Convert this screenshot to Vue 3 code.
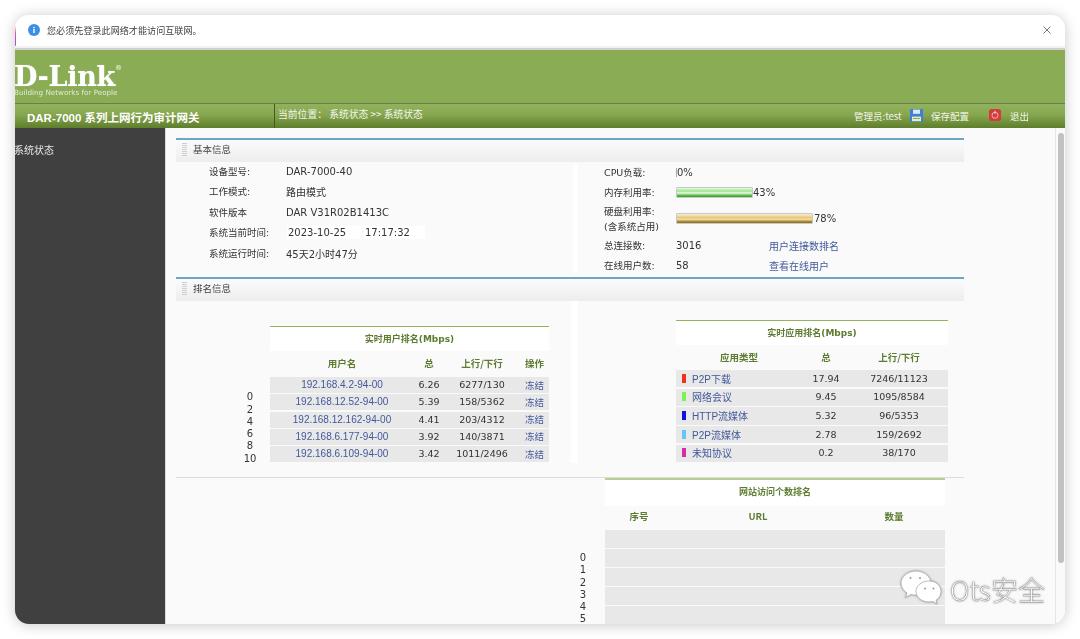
<template>
  <div class="page">
    <div class="window">
      <div class="notice">
        <span class="notice-left">
          <svg class="info-icon" viewBox="0 0 12 12" width="12" height="12">
            <circle cx="6" cy="6" r="6" fill="#3d8ee6" />
            <rect x="5.3" y="5" width="1.4" height="4" fill="#fff" />
            <rect x="5.3" y="2.9" width="1.4" height="1.4" fill="#fff" />
          </svg>
          您必须先登录此网络才能访问互联网。
        </span>
        <svg class="close-icon" viewBox="0 0 8 8" width="8" height="8">
          <path d="M.5.5l7 7M7.5.5l-7 7" stroke="#777" stroke-width="1" fill="none" />
        </svg>
      </div>

      <header class="brand">
        <div class="logo">D-Link<sup>®</sup></div>
        <div class="tagline">Building Networks for People</div>
      </header>

      <nav class="navbar">
        <div class="product">DAR-7000 系列上网行为审计网关</div>
        <div class="crumb">当前位置： 系统状态 &gt;&gt; 系统状态</div>
        <div class="nav-tools">
          <span class="admin">管理员:test</span>
          <svg class="save-icon" viewBox="0 0 13 13" width="13" height="13">
            <rect width="13" height="13" rx="1" fill="#3f7fd8" />
            <rect x="3" y=".6" width="7" height="4.2" fill="#dbe8f8" />
            <rect x="2" y="7.6" width="9" height="4.6" fill="#e8eeb8" />
            <rect x="3" y="9" width="7" height="1" fill="#8aa860" />
          </svg>
          <span class="save-text">保存配置</span>
          <svg class="off-icon" viewBox="0 0 12 12" width="12" height="12">
            <rect width="12" height="12" rx="2.5" fill="#d23c3c" />
            <circle cx="6" cy="6.3" r="3" fill="none" stroke="#f3b0b0" stroke-width="1" />
            <rect x="5.5" y="1.8" width="1" height="3" fill="#f7d0d0" />
          </svg>
          <span class="quit-text">退出</span>
        </div>
      </nav>

      <div class="body">
        <aside class="sidebar">系统状态</aside>

        <main class="content">
          <section class="panel">
            <h2 class="panel-head"><i class="grip"></i>基本信息</h2>
            <div class="basic">
              <div class="basic-left">
                <div class="row"><span class="label">设备型号:</span><span>DAR-7000-40</span></div>
                <div class="row"><span class="label">工作模式:</span><span>路由模式</span></div>
                <div class="row"><span class="label">软件版本</span><span>DAR V31R02B1413C</span></div>
                <div class="row">
                  <span class="label">系统当前时间:</span>
                  <span class="clock date">2023-10-25</span>
                  <span class="clock time">17:17:32</span>
                </div>
                <div class="row"><span class="label">系统运行时间:</span><span>45天2小时47分</span></div>
              </div>
              <div class="basic-right">
                <div class="row">
                  <span class="label">CPU负载:</span>
                  <span class="cpu-tick"></span><span>0%</span>
                </div>
                <div class="row">
                  <span class="label">内存利用率:</span>
                  <span class="bar bar-green"></span><span>43%</span>
                </div>
                <div class="row row-disk">
                  <span class="label">硬盘利用率:<br />(含系统占用)</span>
                  <span class="bar bar-gold"></span><span class="pct">78%</span>
                </div>
                <div class="row">
                  <span class="label">总连接数:</span>
                  <span class="value">3016</span><a class="link">用户连接数排名</a>
                </div>
                <div class="row">
                  <span class="label">在线用户数:</span>
                  <span class="value">58</span><a class="link">查看在线用户</a>
                </div>
              </div>
            </div>
          </section>

          <section class="panel">
            <h2 class="panel-head"><i class="grip"></i>排名信息</h2>
            <div class="rank">
              <div class="rank-left">
                <div class="axis">
                  <span v-for="n in userAxis" :key="n">{{ n }}</span>
                </div>
                <div class="table user-table">
                  <div class="table-title">实时用户排名(Mbps)</div>
                  <div class="table-head cols-user">
                    <span>用户名</span><span>总</span><span>上行/下行</span><span>操作</span>
                  </div>
                  <div class="table-rows">
                    <div v-for="u in users" :key="u.name" class="table-row cols-user">
                      <a class="link ip">{{ u.name }}</a>
                      <span>{{ u.total }}</span>
                      <span>{{ u.flow }}</span>
                      <a class="link">冻结</a>
                    </div>
                  </div>
                </div>
              </div>
              <div class="rank-right">
                <div class="table app-table">
                  <div class="table-title">实时应用排名(Mbps)</div>
                  <div class="table-head cols-app">
                    <span>应用类型</span><span>总</span><span>上行/下行</span>
                  </div>
                  <div class="table-rows">
                    <div v-for="a in apps" :key="a.name" class="table-row cols-app">
                      <a class="link app-name">
                        <i class="swatch" :style="{ background: a.color }"></i>{{ a.name }}
                      </a>
                      <span>{{ a.total }}</span>
                      <span>{{ a.flow }}</span>
                    </div>
                  </div>
                </div>
              </div>
            </div>
          </section>

          <section class="sites">
            <div class="axis site-axis">
              <span v-for="n in 6" :key="n">{{ n - 1 }}</span>
            </div>
            <div class="table site-table">
              <div class="table-title">网站访问个数排名</div>
              <div class="table-head cols-site">
                <span>序号</span><span>URL</span><span>数量</span>
              </div>
              <div class="table-rows">
                <div v-for="n in 5" :key="n" class="table-row"></div>
              </div>
            </div>
          </section>
        </main>

        <div class="scrollbar"><div class="thumb"></div></div>
      </div>

      <div class="watermark">
        <svg viewBox="0 0 44 38" width="44" height="38">
          <path d="M16 1C8 1 1 6.500 1 13c0 4 2.500 7.500 6 10l-1.500 4.500L11 24.500c1.600.4 3.300.6 5 .6 8 0 15-5.500 15-12S24 1 16 1z" fill="#fff" stroke="#aaa" stroke-width=".8" />
          <path d="M29 11c-7 0-13 4.600-13 10.500S22 32 29 32c1.300 0 2.600-.2 3.800-.5l4.200 2.500-1-3.700c3-2 5-5 5-8.800C41 15.600 36 11 29 11z" fill="#fff" stroke="#aaa" stroke-width=".8" />
          <circle cx="10.500" cy="8" r="1" fill="#999" /><circle cx="20" cy="8" r="1" fill="#999" />
          <circle cx="25" cy="18.500" r="1" fill="#999" /><circle cx="33.500" cy="18.500" r="1" fill="#999" />
        </svg>
        <span class="mark-text">Ots安全</span>
      </div>
    </div>
  </div>
</template>

<script setup>
const userAxis = [0, 2, 4, 6, 8, 10]

const users = [
  { name: '192.168.4.2-94-00', total: '6.26', flow: '6277/130' },
  { name: '192.168.12.52-94-00', total: '5.39', flow: '158/5362' },
  { name: '192.168.12.162-94-00', total: '4.41', flow: '203/4312' },
  { name: '192.168.6.177-94-00', total: '3.92', flow: '140/3871' },
  { name: '192.168.6.109-94-00', total: '3.42', flow: '1011/2496' }
]

const apps = [
  { name: 'P2P下载', total: '17.94', flow: '7246/11123', color: '#f03020' },
  { name: '网络会议', total: '9.45', flow: '1095/8584', color: '#7cf450' },
  { name: 'HTTP流媒体', total: '5.32', flow: '96/5353', color: '#1010e0' },
  { name: 'P2P流媒体', total: '2.78', flow: '159/2692', color: '#60c8f8' },
  { name: '未知协议', total: '0.2', flow: '38/170', color: '#d030a0' }
]
</script>

<style>
html,
body {
  margin: 0;
  background: #fff;
}
</style>

<style scoped>
.page {
  width: 1080px;
  height: 639px;
  padding: 15px;
  box-sizing: border-box;
  background: #fff;
  overflow: hidden;
  font-family: "DejaVu Sans", "Noto Sans CJK SC", sans-serif;
  font-size: 10px;
  color: #333;
}

.window {
  position: relative;
  height: 609px;
  display: flex;
  flex-direction: column;
  border-radius: 14px;
  overflow: hidden;
  background: #fafafa;
  box-shadow: 0 1px 14px rgba(0, 0, 0, 0.22);
  filter: blur(0.3px);
}

.notice {
  flex: none;
  height: 35px;
  padding: 0 14px 3px 13px;
  box-sizing: border-box;
  display: flex;
  align-items: center;
  justify-content: space-between;
  background: linear-gradient(#fff 30%, #e8559a 55%, #8a5ce0 90%, #fff) left / 1px 100% no-repeat, #fff;
  border-bottom: 2px solid #d0d0d0;
  box-shadow: inset 0 -2px 0 #f2f2f2;
  font-family: "Noto Sans CJK SC", sans-serif;
  font-size: 9.1px;
  color: #444;
}

.notice-left {
  display: flex;
  align-items: center;
  gap: 7px;
}

.brand {
  flex: none;
  height: 53px;
  background: #8aac55;
  color: #fff;
  overflow: hidden;
}

.logo {
  margin: 15px 0 0 -1px;
  font-family: "DejaVu Serif", serif;
  font-weight: 700;
  font-size: 27px;
  line-height: 24px;
  letter-spacing: -0.3px;
  text-shadow: 0 0 1px rgba(255, 255, 255, 0.6);
}

.logo sup {
  font-family: "DejaVu Sans", sans-serif;
  font-weight: 400;
  font-size: 7px;
  line-height: 0;
  vertical-align: 16px;
  color: #dde8c8;
}

.tagline {
  margin-left: -1px;
  font-family: "DejaVu Sans", sans-serif;
  font-size: 7.2px;
  line-height: 7px;
  color: #e2ebd2;
  white-space: nowrap;
}

.navbar {
  flex: none;
  height: 25px;
  box-sizing: border-box;
  display: flex;
  align-items: stretch;
  border-top: 1px solid #6d7c55;
  background: linear-gradient(#93b25c, #86a64f 45%, #5f7e2c);
  color: #f2f5ea;
}

.product {
  width: 260px;
  padding-left: 12px;
  box-sizing: border-box;
  display: flex;
  align-items: center;
  padding-top: 1px;
  font-family: "Liberation Sans", "Noto Sans CJK SC", sans-serif;
  font-weight: 700;
  font-size: 11.5px;
  color: #fff;
  border-right: 1px solid #47591f;
}

.crumb {
  padding: 0 0 4px 3px;
  display: flex;
  align-items: center;
  font-family: "Noto Sans CJK SC", sans-serif;
  font-size: 9.8px;
  white-space: pre;
}

.nav-tools {
  margin-left: auto;
  display: flex;
  align-items: center;
  font-family: "Noto Sans CJK SC", sans-serif;
  font-size: 9.5px;
}

.admin {
  width: 56px;
}

.save-icon {
  margin-top: -2px;
}

.save-text {
  width: 66px;
  padding-left: 8px;
  box-sizing: border-box;
}

.off-icon {
  margin-top: -3px;
}

.quit-text {
  width: 64px;
  padding-left: 9px;
  box-sizing: border-box;
}

.body {
  flex: 1;
  min-height: 0;
  display: flex;
}

.sidebar {
  flex: none;
  width: 150px;
  padding-top: 15px;
  box-sizing: border-box;
  background: #404040;
  color: #e6e6e6;
  font-family: "Noto Sans CJK SC", sans-serif;
  line-height: 14px;
  text-indent: -1px;
  overflow: hidden;
}

.content {
  flex: 1;
  min-width: 0;
  padding: 10px 0 0 11px;
  overflow: hidden;
  box-shadow: inset 1px 0 #dcdcdc;
}

.panel {
  width: 788px;
}

.panel-head {
  margin: 0;
  height: 24px;
  box-sizing: border-box;
  display: flex;
  align-items: center;
  gap: 6px;
  padding: 0 0 4px 6px;
  border-top: 2px solid #6ba6c2;
  background: linear-gradient(#fbfbfb, #ededed);
  font-family: "Noto Sans CJK SC", sans-serif;
  font-size: 9.5px;
  font-weight: 400;
  color: #444;
}

.grip {
  width: 5px;
  height: 13px;
  background: repeating-linear-gradient(#cfcfcf 0 1px, transparent 1px 2px);
}

.basic {
  height: 115px;
  display: flex;
}

.basic-left {
  width: 397px;
  height: 106px;
  margin-top: -1px;
  padding-left: 33px;
  box-sizing: border-box;
}

.basic-left .row {
  height: 20.5px;
}

.basic-right {
  flex: 1;
  padding-left: 25px;
  border-left: 5px solid #fff;
  height: 108px;
  margin-top: 3px;
}

.basic-right .row {
  height: 20px;
}

.basic-right .row:first-child {
  height: 17px;
  box-sizing: border-box;
  padding-bottom: 2px;
}

.basic-right .row-disk {
  height: 33px;
}

.row {
  display: flex;
  align-items: center;
  white-space: nowrap;
}

.row .label {
  flex: none;
  width: 77px;
  line-height: 15px;
  font-family: "DejaVu Sans", "Noto Sans CJK SC", sans-serif;
  font-size: 9.5px;
}

.basic-right .label {
  width: 73px;
  margin-left: 1px;
  margin-right: -1px;
}

.clock {
  background: #fff;
  height: 13px;
  line-height: 13px;
  padding-left: 1px;
  box-sizing: border-box;
}

.date {
  width: 74px;
  margin-left: 1px;
  margin-right: 3px;
}

.time {
  width: 61px;
}

.value {
  width: 93px;
}

.link {
  color: #41599b;
  font-family: "Noto Sans CJK SC", sans-serif;
}

.cpu-tick {
  width: 1px;
  height: 9px;
  background: #aaa;
}

.bar {
  display: block;
  height: 11px;
  box-sizing: border-box;
  border: 1px solid #c8c8c8;
  border-radius: 1px;
}

.bar-green {
  width: 77px;
  background: linear-gradient(#e8f8e4, #9be88c 35%, #e8fbe4 55%, #4fb53f 85%, #3e9b34);
}

.bar-gold {
  width: 137px;
  background: linear-gradient(#fbeed8, #e8c67c 40%, #f0dfa0 60%, #a9842f 85%, #8c6a20);
}

.pct {
  margin-left: 1px;
}

.rank {
  height: 176px;
  display: flex;
}

.rank-left {
  width: 395px;
  height: 162px;
  box-sizing: border-box;
  padding-left: 67px;
  display: flex;
}

.axis {
  width: 14px;
  margin-right: 13px;
  display: flex;
  flex-direction: column;
  align-items: center;
  font-size: 10px;
  line-height: 12.3px;
  color: #333;
}

.rank-left .axis {
  align-self: flex-end;
  margin-bottom: -2px;
}

.rank-right {
  width: 386px;
  height: 162px;
  padding-left: 98px;
  box-sizing: border-box;
  border-left: 7px solid #fff;
}

.table {
  font-size: 9.5px;
}

.table-title {
  height: 24px;
  box-sizing: border-box;
  padding-bottom: 2px;
  display: flex;
  align-items: center;
  justify-content: center;
  background: #fff;
  font-family: "DejaVu Sans", "Noto Sans CJK SC", sans-serif;
  font-weight: 700;
  color: #5d7c31;
  font-size: 9px;
}

.table-head {
  box-sizing: border-box;
  padding-bottom: 2px;
  font-family: "Noto Sans CJK SC", sans-serif;
  font-weight: 700;
  color: #5d7c31;
  align-items: center;
  text-align: center;
}

.cols-user,
.cols-app,
.cols-site {
  display: grid;
  justify-items: center;
  align-items: center;
}

.cols-user {
  grid-template-columns: 144px 30px 76px 29px;
}

.cols-app {
  grid-template-columns: 126px 48px 98px;
}

.cols-site {
  grid-template-columns: 68px 170px 102px;
}

.table-rows {
  display: flex;
  flex-direction: column;
}

.table-row {
  background: #e8e8e8;
  box-sizing: border-box;
  padding-bottom: 1px;
}

.user-table {
  width: 279px;
  margin-top: 25px;
  border-top: 1px solid #93b35e;
}

.user-table .table-head {
  height: 26px;
}

.user-table .table-rows {
  gap: 1.25px;
}

.user-table .table-row {
  height: 16px;
}

.ip {
  font-family: "Liberation Sans", sans-serif;
  font-size: 10px;
}

.app-table {
  width: 272px;
  margin-top: 19px;
  border-top: 1px solid #93b35e;
}

.app-table .table-head {
  height: 25px;
}

.app-table .table-rows {
  gap: 1.5px;
}

.app-table .table-row {
  height: 17.2px;
}

.app-name {
  justify-self: start;
  display: flex;
  align-items: center;
  padding-left: 6px;
  font-family: "Liberation Sans", "Noto Sans CJK SC", sans-serif;
  font-size: 10px;
}

.swatch {
  width: 4px;
  height: 9px;
  margin-right: 6px;
}

.sites {
  height: 148px;
  width: 788px;
  box-sizing: border-box;
  padding-left: 401px;
  display: flex;
  border-top: 1px solid #dcdcdc;
}

.site-axis {
  width: 12px;
  margin-right: 16px;
  margin-top: 74px;
}

.site-table {
  width: 340px;
  border-top: 2px solid #b7cd95;
}

.site-table .table-title {
  height: 26px;
  padding-bottom: 4px;
}

.site-table .table-head {
  height: 24px;
  padding-bottom: 4px;
}

.site-table .table-rows {
  gap: 1.5px;
}

.site-table .table-row {
  height: 17.6px;
}

.scrollbar {
  flex: none;
  width: 10px;
  box-sizing: border-box;
  padding: 5px 1px 0 2px;
  background: #fafafa;
  border-left: 1px solid #e6e6e6;
}

.thumb {
  height: 430px;
  border-radius: 3px;
  background: #c2c2c2;
}

.watermark {
  position: absolute;
  left: 885px;
  top: 553px;
  display: flex;
  align-items: center;
  gap: 6px;
  filter: drop-shadow(0 0 1px rgba(90, 90, 90, 0.5));
}

.mark-text {
  font-family: "Noto Sans CJK SC", sans-serif;
  font-weight: 300;
  font-size: 27px;
  color: #fff;
  -webkit-text-stroke: 0.4px #8f8f8f;
  margin-top: 2px;
}
</style>
